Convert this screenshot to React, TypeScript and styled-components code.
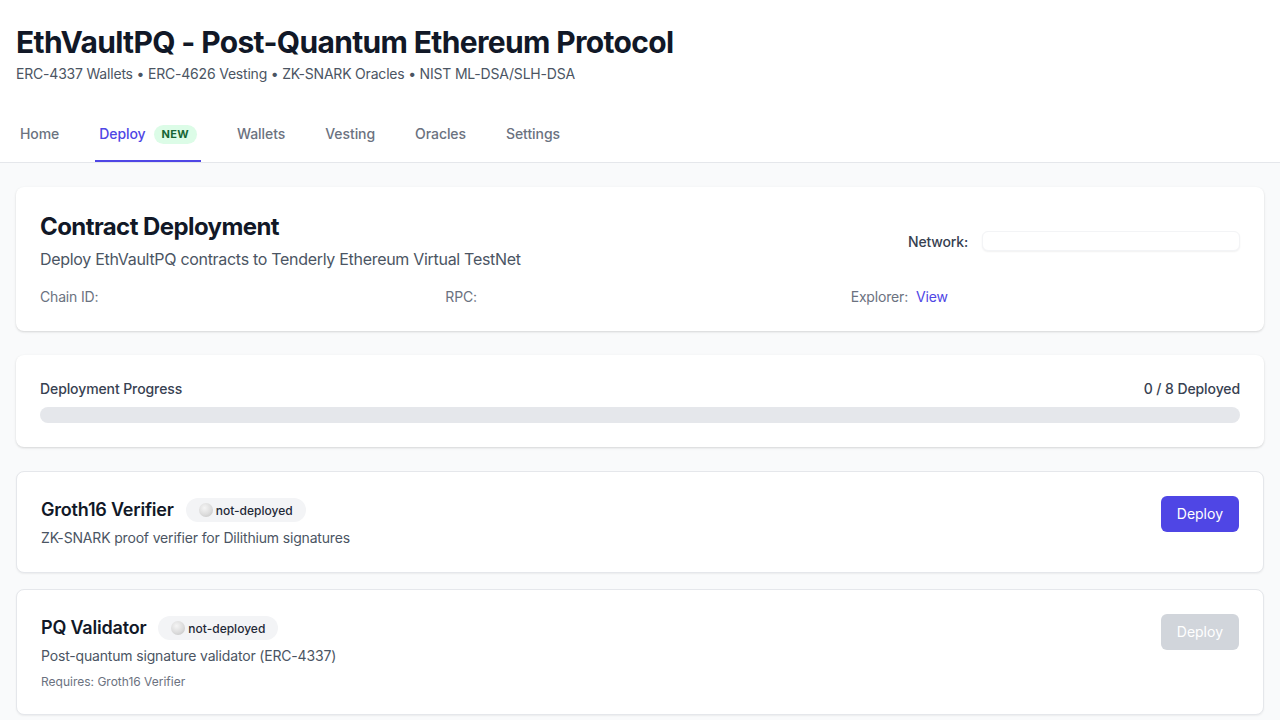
import React from "react";
import styled, { createGlobalStyle } from "styled-components";

const GlobalStyle = createGlobalStyle`
  * { box-sizing: border-box; }
  html, body { margin: 0; padding: 0; }
  body {
    font-family: Inter, "Noto Sans", "Liberation Sans", sans-serif;
    background: #f9fafb;
    color: #111827;
    letter-spacing: -0.17px;
    -webkit-font-smoothing: antialiased;
  }
`;

const Page = styled.div`
  min-height: 720px;
  background: #f9fafb;
`;

const Header = styled.header`
  background: #ffffff;
  border-bottom: 1px solid #e5e7eb;
`;

const HeaderTop = styled.div`
  padding: 24px 16px 24px;
`;

const Title = styled.h1`
  margin: 0;
  font-size: 30px;
  line-height: 36px;
  font-weight: 700;
  color: #111827;
  letter-spacing: -0.66px;
`;

const Subtitle = styled.p`
  margin: 4px 0 0;
  font-size: 14px;
  line-height: 20px;
  letter-spacing: -0.2px;
  color: #4b5563;
`;

const Nav = styled.nav`
  display: flex;
  gap: 32px;
  padding: 0 16px;
`;

const Tab = styled.a<{ $active?: boolean }>`
  display: flex;
  align-items: center;
  gap: 8px;
  padding: 16px 4px 16px;
  font-size: 14px;
  line-height: 20px;
  font-weight: 500;
  letter-spacing: -0.07px;
  color: ${(p) => (p.$active ? "#4f46e5" : "#6b7280")};
  border-bottom: 2px solid ${(p) => (p.$active ? "#4f46e5" : "transparent")};
  text-decoration: none;
  cursor: pointer;
`;

const NewBadge = styled.span`
  display: inline-flex;
  align-items: center;
  height: 19px;
  padding: 0 8px;
  border-radius: 9999px;
  background: #dcfce7;
  color: #166534;
  font-size: 11px;
  font-weight: 700;
  letter-spacing: 0.3px;
`;

const Main = styled.main`
  display: flex;
  flex-direction: column;
  padding: 24px 16px;
`;

const Card = styled.section`
  background: #ffffff;
  border-radius: 8px;
  box-shadow: 0 1px 3px rgba(0, 0, 0, 0.1), 0 1px 2px rgba(0, 0, 0, 0.06);
  padding: 24px;
  margin-bottom: 24px;
`;

const CardHead = styled.div`
  display: flex;
  justify-content: space-between;
  align-items: center;
`;

const CardTitle = styled.h2`
  margin: 0;
  font-size: 24px;
  line-height: 32px;
  font-weight: 700;
  letter-spacing: -0.58px;
  color: #111827;
`;

const CardDesc = styled.p`
  margin: 4px 0 0;
  font-size: 16px;
  line-height: 24px;
  letter-spacing: -0.3px;
  color: #4b5563;
`;

const NetworkWrap = styled.div`
  display: flex;
  align-items: center;
  gap: 14px;
`;

const NetworkLabel = styled.span`
  font-size: 14px;
  font-weight: 500;
  color: #374151;
`;

const NetworkSelect = styled.div`
  width: 258px;
  height: 20px;
  border-radius: 6px;
  background: #ffffff;
  box-shadow: 0 1px 2px rgba(0, 0, 0, 0.06);
  border: 1px solid #f3f4f6;
`;

const InfoGrid = styled.div`
  display: grid;
  grid-template-columns: repeat(3, 1fr);
  gap: 16px;
  margin-top: 16px;
  font-size: 14px;
  line-height: 20px;
  color: #6b7280;
`;

const InfoItem = styled.div`
  display: flex;
  gap: 8px;
`;

const Link = styled.a`
  color: #4f46e5;
  text-decoration: none;
`;

const ProgressHead = styled.div`
  display: flex;
  justify-content: space-between;
  font-size: 14px;
  line-height: 20px;
  font-weight: 500;
  letter-spacing: -0.1px;
  color: #374151;
`;

const ProgressTrack = styled.div`
  margin-top: 8px;
  height: 16px;
  border-radius: 9999px;
  background: #e5e7eb;
  overflow: hidden;
`;

const ProgressFill = styled.div`
  height: 100%;
  background: #4f46e5;
  border-radius: 9999px;
`;

const ContractList = styled.div`
  display: flex;
  flex-direction: column;
  gap: 16px;
`;

const ContractCard = styled.div`
  display: flex;
  justify-content: space-between;
  align-items: flex-start;
  background: #ffffff;
  border: 1px solid #e5e7eb;
  border-radius: 8px;
  box-shadow: 0 1px 2px rgba(0, 0, 0, 0.06);
  padding: 24px;
`;

const ContractInfo = styled.div`
  display: flex;
  flex-direction: column;
`;

const ContractHead = styled.div`
  display: flex;
  align-items: center;
  gap: 12px;
`;

const ContractName = styled.h3`
  margin: 0;
  font-size: 18px;
  line-height: 28px;
  font-weight: 600;
  letter-spacing: -0.2px;
  color: #111827;
`;

const StatusBadge = styled.span`
  display: inline-flex;
  align-items: center;
  gap: 3px;
  height: 24px;
  padding: 0 13px 0 13px;
  border-radius: 9999px;
  background: #f3f4f6;
  color: #1f2937;
  font-size: 12px;
  font-weight: 500;
  letter-spacing: 0;
`;

const StatusDot = styled.span`
  width: 14px;
  height: 14px;
  border-radius: 50%;
  background: radial-gradient(circle at 40% 35%, #f5f5f5 0%, #dcdcdc 55%, #bdbdbd 100%);
`;

const ContractDesc = styled.p`
  margin: 4px 0 0;
  font-size: 14px;
  line-height: 20px;
  color: #4b5563;
`;

const Requires = styled.p`
  margin: 8px 0 0;
  font-size: 12px;
  line-height: 16px;
  letter-spacing: 0;
  color: #6b7280;
`;

const DeployButton = styled.button`
  padding: 8px 16px;
  border: none;
  border-radius: 6px;
  font-family: inherit;
  font-size: 14px;
  line-height: 20px;
  letter-spacing: 0;
  color: #ffffff;
  background: ${(p) => (p.disabled ? "#d1d5db" : "#4f46e5")};
  cursor: ${(p) => (p.disabled ? "not-allowed" : "pointer")};
`;

const tabs = ["Home", "Deploy", "Wallets", "Vesting", "Oracles", "Settings"];

const contracts = [
  {
    name: "Groth16 Verifier",
    desc: "ZK-SNARK proof verifier for Dilithium signatures",
    requires: null as string | null,
    enabled: true,
  },
  {
    name: "PQ Validator",
    desc: "Post-quantum signature validator (ERC-4337)",
    requires: "Groth16 Verifier",
    enabled: false,
  },
];

export default function App() {
  const deployed = 0;
  const total = 8;
  return (
    <Page>
      <GlobalStyle />
      <Header>
        <HeaderTop>
          <Title>EthVaultPQ - Post-Quantum Ethereum Protocol</Title>
          <Subtitle>
            ERC-4337 Wallets • ERC-4626 Vesting • ZK-SNARK Oracles • NIST ML-DSA/SLH-DSA
          </Subtitle>
        </HeaderTop>
        <Nav>
          {tabs.map((t) => (
            <Tab key={t} $active={t === "Deploy"}>
              {t}
              {t === "Deploy" && <NewBadge>NEW</NewBadge>}
            </Tab>
          ))}
        </Nav>
      </Header>
      <Main>
        <Card>
          <CardHead>
            <div>
              <CardTitle>Contract Deployment</CardTitle>
              <CardDesc>Deploy EthVaultPQ contracts to Tenderly Ethereum Virtual TestNet</CardDesc>
            </div>
            <NetworkWrap>
              <NetworkLabel>Network:</NetworkLabel>
              <NetworkSelect />
            </NetworkWrap>
          </CardHead>
          <InfoGrid>
            <InfoItem>Chain ID:</InfoItem>
            <InfoItem>RPC:</InfoItem>
            <InfoItem>
              Explorer: <Link>View</Link>
            </InfoItem>
          </InfoGrid>
        </Card>
        <Card>
          <ProgressHead>
            <span>Deployment Progress</span>
            <span>
              {deployed} / {total} Deployed
            </span>
          </ProgressHead>
          <ProgressTrack>
            <ProgressFill style={{ width: `${(deployed / total) * 100}%` }} />
          </ProgressTrack>
        </Card>
        <ContractList>
          {contracts.map((c) => (
            <ContractCard key={c.name}>
              <ContractInfo>
                <ContractHead>
                  <ContractName>{c.name}</ContractName>
                  <StatusBadge>
                    <StatusDot />
                    not-deployed
                  </StatusBadge>
                </ContractHead>
                <ContractDesc>{c.desc}</ContractDesc>
                {c.requires && <Requires>Requires: {c.requires}</Requires>}
              </ContractInfo>
              <DeployButton disabled={!c.enabled}>Deploy</DeployButton>
            </ContractCard>
          ))}
        </ContractList>
      </Main>
    </Page>
  );
}
